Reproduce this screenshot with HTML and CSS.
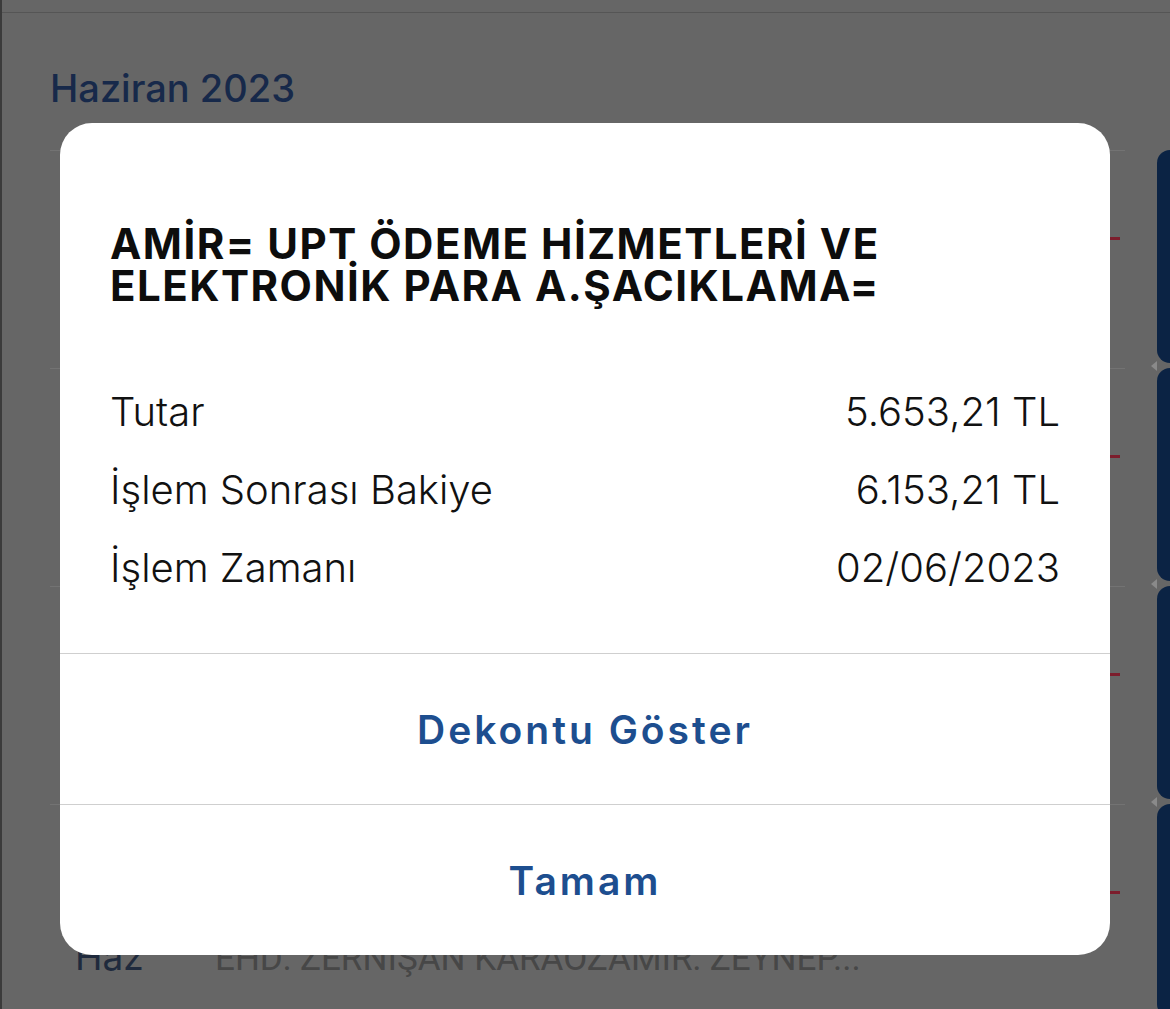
FILE: index.html
```html
<!DOCTYPE html>
<html lang="tr">
<head>
    <meta charset="UTF-8">
    <title>Hesap Hareketleri</title>
    <link rel="stylesheet" href="styles.css">
</head>
<body>
<div class="screen">
    <div class="topbar"></div>
    <h2 class="month">Haziran 2023</h2>

    <ul class="tx-list">
        <li class="tx">
            <div class="tx-main"><span class="tx-minus"></span></div>
            <div class="tx-swipe"></div>
        </li>
        <li class="tx">
            <div class="tx-main"><span class="tx-minus"></span></div>
            <div class="tx-swipe"></div>
        </li>
        <li class="tx">
            <div class="tx-main"><span class="tx-minus"></span></div>
            <div class="tx-swipe"></div>
        </li>
        <li class="tx">
            <div class="tx-main">
                <span class="tx-minus"></span>
                <div class="tx-info">
                    <span class="tx-date">Haz</span>
                    <span class="tx-desc">EHD: ZERNİŞAN KARAÖZAMİR: ZEYNEP...</span>
                </div>
            </div>
            <div class="tx-swipe"></div>
        </li>
    </ul>

    <!-- işlem detayı penceresi -->
    <div class="dialog">
        <div class="dialog-body">
            <h3 class="dialog-title">AMİR= UPT ÖDEME HİZMETLERİ VE ELEKTRONİK PARA A.ŞACIKLAMA=</h3>
            <div class="detail-row">
                <span>Tutar</span>
                <span>5.653,21 TL</span>
            </div>
            <div class="detail-row">
                <span>İşlem Sonrası Bakiye</span>
                <span>6.153,21 TL</span>
            </div>
            <div class="detail-row">
                <span>İşlem Zamanı</span>
                <span>02/06/2023</span>
            </div>
        </div>
        <div class="dialog-btn">Dekontu Göster</div>
        <div class="dialog-btn">Tamam</div>
    </div>
</div>
</body>
</html>
```

FILE: styles.css
```css
*{
    margin: 0;
    padding: 0;
    list-style: none;
    box-sizing: border-box;
}
html,body{
    background-color: #666666;
    font-family: "Inter", "Noto Sans", sans-serif;
}
.screen{
    position: relative;
    height: 1009px;
    overflow: hidden;
    border-left: 2px solid #3b3b3b;
}
.topbar{
    height: 13px;
    border-bottom: 1px solid #555555;
}

.month{
    margin: 56px 0 43px 48px;
    font-size: 38px;
    line-height: 38px;
    font-weight: 500;
    color: #17294a;
}

.tx{
    display: flex;
    height: 218px;
}
.tx-main{
    flex: 1;
    margin-left: 48px;
    padding-top: 86px;
    border-top: 1px solid #737373;
    display: flex;
    flex-direction: column;
}
.tx-minus{
    align-self: flex-end;
    width: 10px;
    height: 3px;
    margin-right: 5px;
    background-color: #7c1d2c;
}
.tx-info{
    display: flex;
    align-items: baseline;
    margin-top: 43px;
    padding-left: 25px;
}
.tx-date{
    width: 140px;
    font-size: 37px;
    line-height: 40px;
    color: #1f2a3d;
}
.tx-desc{
    font-family: "Roboto", sans-serif;
    font-size: 35px;
    color: #474747;
}
.tx-swipe{
    position: relative;
    width: 13px;
    margin: 0 0 5px 32px;
    background-color: #0b2344;
    border-radius: 15px 0 0 15px;
}
/* küçük ok, kartların arasında */
.tx-swipe::after{
    content: "";
    position: absolute;
    left: -6px;
    bottom: -8px;
    border: 5px solid transparent;
    border-right: 6px solid #8a8a8a;
    border-left: 0;
}

.dialog{
    position: absolute;
    top: 123px;
    left: 58px;
    width: 1050px;
    height: 832px;
    background-color: #fff;
    border-radius: 32px;
    display: flex;
    flex-direction: column;
    overflow: hidden;
}
.dialog-body{
    height: 530px;
    padding: 100px 50px 0 50px;
}
.dialog-title{
    font-size: 42px;
    line-height: 42px;
    font-weight: 700;
    letter-spacing: 1.5px;
    color: #0d0d0d;
    margin-bottom: 66px;
}
.detail-row{
    display: flex;
    justify-content: space-between;
    height: 78px;
    line-height: 78px;
    font-size: 40px;
    font-weight: 300;
    color: #111111;
}
.dialog-btn{
    height: 151px;
    border-top: 1px solid #cfcfcf;
    display: flex;
    align-items: center;
    justify-content: center;
    font-size: 39px;
    line-height: 39px;
    font-weight: 600;
    letter-spacing: 3px;
    color: #1d4e8f;
}
```
